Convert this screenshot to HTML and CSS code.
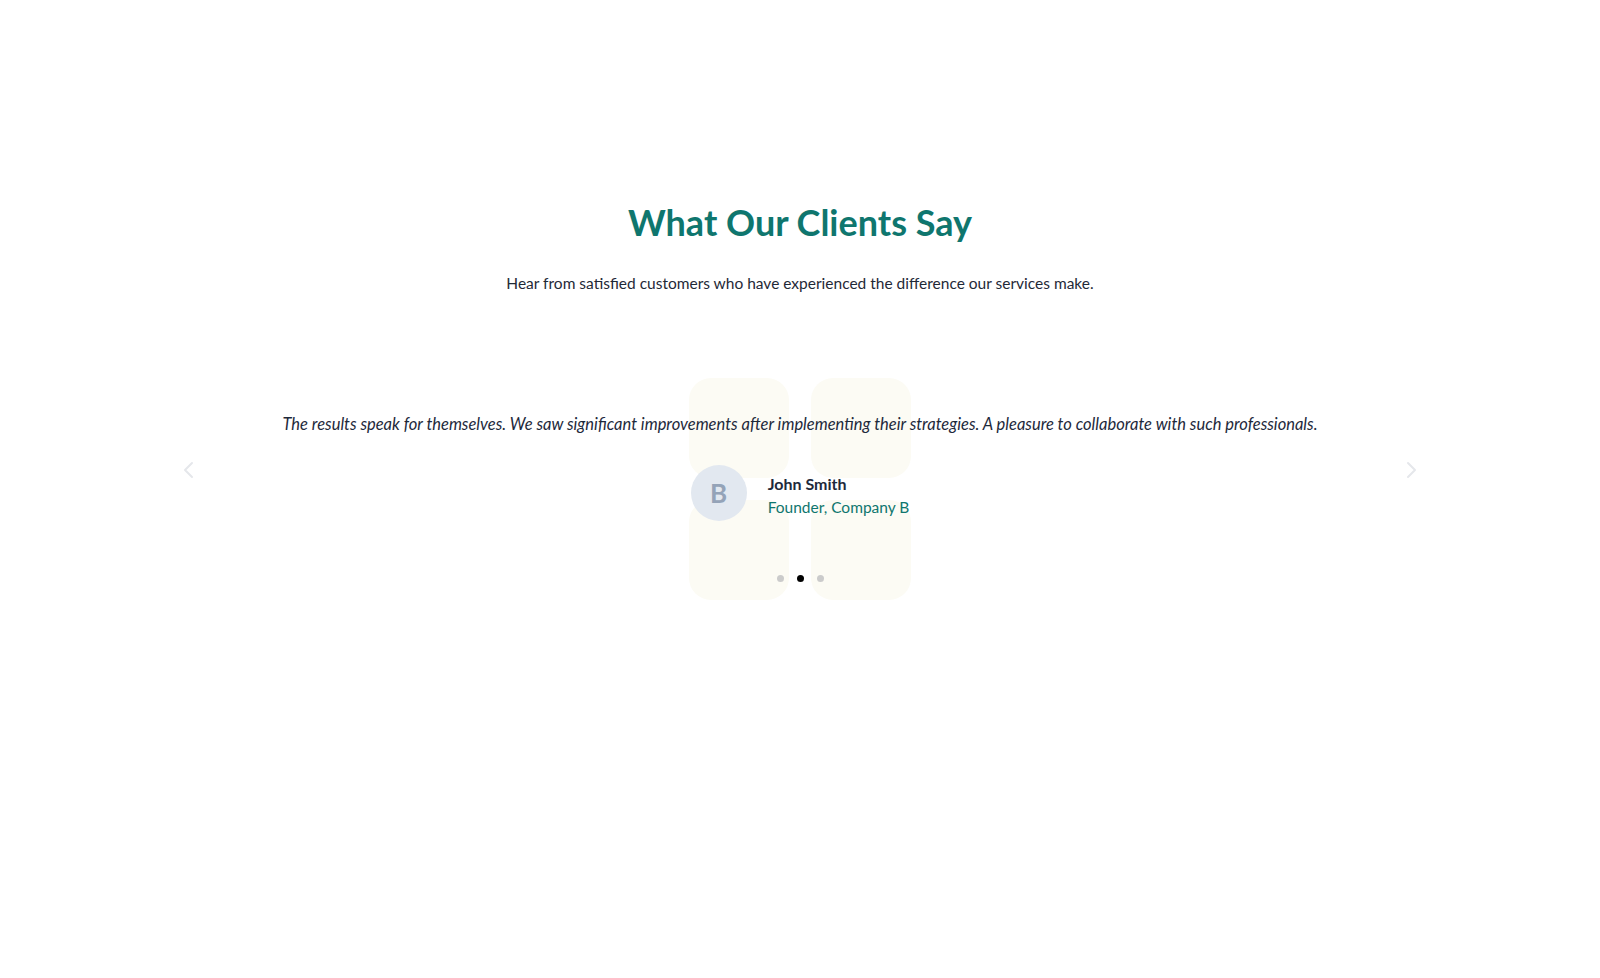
FILE: index.html
```html
<!DOCTYPE html>
<html lang="en">
<head>
<meta charset="utf-8">
<title>What Our Clients Say</title>
<link rel="stylesheet" href="styles.css">
</head>
<body>
<section class="testimonials">
  <h2 class="testimonials__title">What Our Clients Say</h2>
  <p class="testimonials__lead">Hear from satisfied customers who have experienced the difference our services make.</p>

  <div class="carousel">
    <div class="carousel__decor" aria-hidden="true">
      <span class="tile"></span><span class="tile"></span>
      <span class="tile"></span><span class="tile"></span>
    </div>

    <div class="carousel__row">
      <button class="carousel__arrow" aria-label="Previous">
        <svg viewBox="0 0 24 24" width="24" height="24"><path d="M15 5l-7 7 7 7" fill="none" stroke="currentColor" stroke-width="2" stroke-linecap="round" stroke-linejoin="round"/></svg>
      </button>

      <div class="slide">
        <blockquote class="slide__quote">The results speak for themselves. We saw significant improvements after implementing their strategies. A pleasure to collaborate with such professionals.</blockquote>
        <div class="slide__author">
          <div class="avatar">B</div>
          <div class="author__meta">
            <div class="author__name">John Smith</div>
            <div class="author__role">Founder, Company B</div>
          </div>
        </div>
      </div>

      <button class="carousel__arrow" aria-label="Next">
        <svg viewBox="0 0 24 24" width="24" height="24"><path d="M9 5l7 7-7 7" fill="none" stroke="currentColor" stroke-width="2" stroke-linecap="round" stroke-linejoin="round"/></svg>
      </button>
    </div>

    <div class="carousel__dots">
      <span class="dot"></span>
      <span class="dot dot--active"></span>
      <span class="dot"></span>
    </div>
  </div>
</section>
</body>
</html>
```

FILE: styles.css
```css
* { box-sizing: border-box; }

body {
  margin: 0;
  background: #ffffff;
  font-family: "Lato", "Noto Sans", sans-serif;
  color: #1e293b;
}

.testimonials {
  padding-top: 200px;
  padding-bottom: 80px;
  display: flex;
  flex-direction: column;
  align-items: center;
}

.testimonials__title {
  margin: 0;
  font-size: 36px;
  line-height: 44px;
  font-weight: 700;
  color: #0f766e;
}

.testimonials__lead {
  margin: 27px 0 0;
  font-size: 15.5px;
  line-height: 24px;
  color: #1f2937;
}

.carousel {
  position: relative;
  width: 1262px;
  margin-top: 76px;
  padding-bottom: 40px;
}

/* soft tiles sitting behind the slide */
.carousel__decor {
  position: absolute;
  left: 50%;
  top: 7px;
  width: 222px;
  height: 222px;
  transform: translateX(-50%);
  display: grid;
  grid-template-columns: 100px 100px;
  grid-template-rows: 100px 100px;
  gap: 22px;
  z-index: 0;
}

.tile {
  display: block;
  width: 100px;
  height: 100px;
  background: #fcfbf4;
  border-radius: 22px;
}

.carousel__row {
  position: relative;
  z-index: 1;
  display: flex;
  align-items: flex-start;
}

.carousel__arrow {
  flex: 0 0 40px;
  height: 40px;
  margin-top: 79px;
  padding: 0;
  border: 0;
  background: transparent;
  color: #e5e7eb;
  display: flex;
  align-items: center;
  justify-content: center;
}

.slide {
  flex: 1;
  display: flex;
  flex-direction: column;
  align-items: center;
  padding-top: 40px;
}

.slide__quote {
  margin: 0;
  font-size: 16.5px;
  line-height: 26px;
  font-style: italic;
  color: #1e293b;
}

.slide__author {
  margin-top: 28px;
  display: flex;
  align-items: center;
  gap: 21px;
}

.avatar {
  width: 56px;
  height: 56px;
  border-radius: 50%;
  background: #e2e8f0;
  color: #94a3b8;
  font-size: 26px;
  font-weight: 700;
  display: flex;
  align-items: center;
  justify-content: center;
}

.author__meta {
  padding-top: 4px;
}

.author__name {
  font-size: 16px;
  line-height: 22px;
  font-weight: 700;
  color: #1e293b;
}

.author__role {
  margin-top: 1px;
  font-size: 15.5px;
  line-height: 22px;
  color: #0f766e;
}

.carousel__dots {
  position: relative;
  z-index: 1;
  margin-top: 54px;
  display: flex;
  justify-content: center;
  gap: 13px;
}

.dot {
  width: 7px;
  height: 7px;
  border-radius: 50%;
  background: #cbcbcb;
}

.dot--active { background: #000000; }
```
